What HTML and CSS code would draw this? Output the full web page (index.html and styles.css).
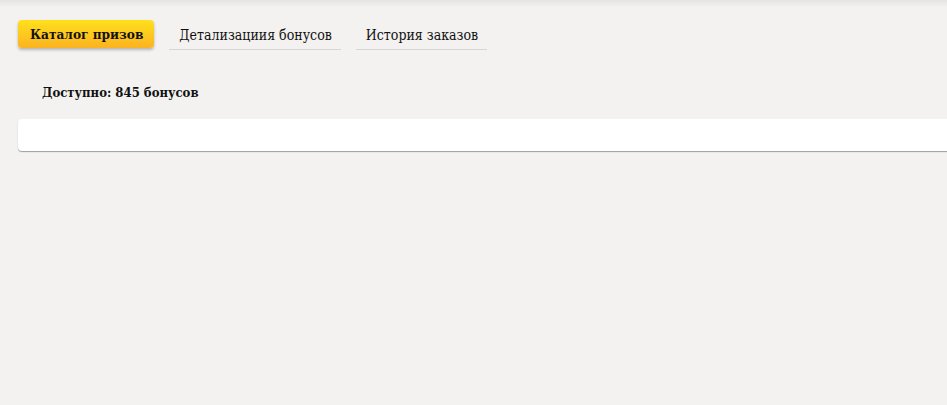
FILE: index.html
```html
<!DOCTYPE html>
<html lang="ru">
<head>
<meta charset="utf-8">
<link rel="stylesheet" href="styles.css">
</head>
<body>
<div class="page">
  <nav class="tabs">
    <a class="tab tab-active">Каталог призов</a>
    <a class="tab">Детализациия бонусов</a>
    <a class="tab">История заказов</a>
  </nav>
  <div class="balance">Доступно: 845 бонусов</div>
  <div class="card"></div>
</div>
</body>
</html>
```
FILE: styles.css
```css
html, body {
  margin: 0;
  padding: 0;
  height: 100%;
}
body {
  background: linear-gradient(to bottom, #e4e3e1 0, #f3f2f0 7px) #f3f2f0;
  font-family: "DejaVu Serif", "Liberation Serif", serif;
  color: #111;
  overflow: hidden;
}
.page {
  padding: 20px 0 0 18px;
  overflow: hidden;
}
.tabs {
  display: flex;
  gap: 15px;
  align-items: flex-start;
}
.tab {
  display: flex;
  align-items: center;
  height: 30px;
  padding: 0 9px 0 10px;
  font-size: 14px;
  font-stretch: condensed;
  border-bottom: 1px solid #d6d6d6;
  box-sizing: border-box;
  white-space: nowrap;
}
.tab-active {
  height: 28px;
  padding: 0 11px 0 12px;
  font-size: 13.5px;
  border-bottom: none;
  border-radius: 4px;
  font-weight: bold;
  background: linear-gradient(#ffe01c, #fbb321);
  box-shadow: 0 2px 3px rgba(0,0,0,0.25);
}
.balance {
  margin: 34px 0 0 24px;
  font-size: 13px;
  font-weight: bold;
  font-stretch: condensed;
  line-height: 18px;
}
.card {
  margin: 17px 0 4px;
  width: calc(100% + 12px);
  height: 32px;
  background: #fff;
  border-radius: 4px;
  box-shadow: 0 1px 1px rgba(0,0,0,0.35);
}
```
